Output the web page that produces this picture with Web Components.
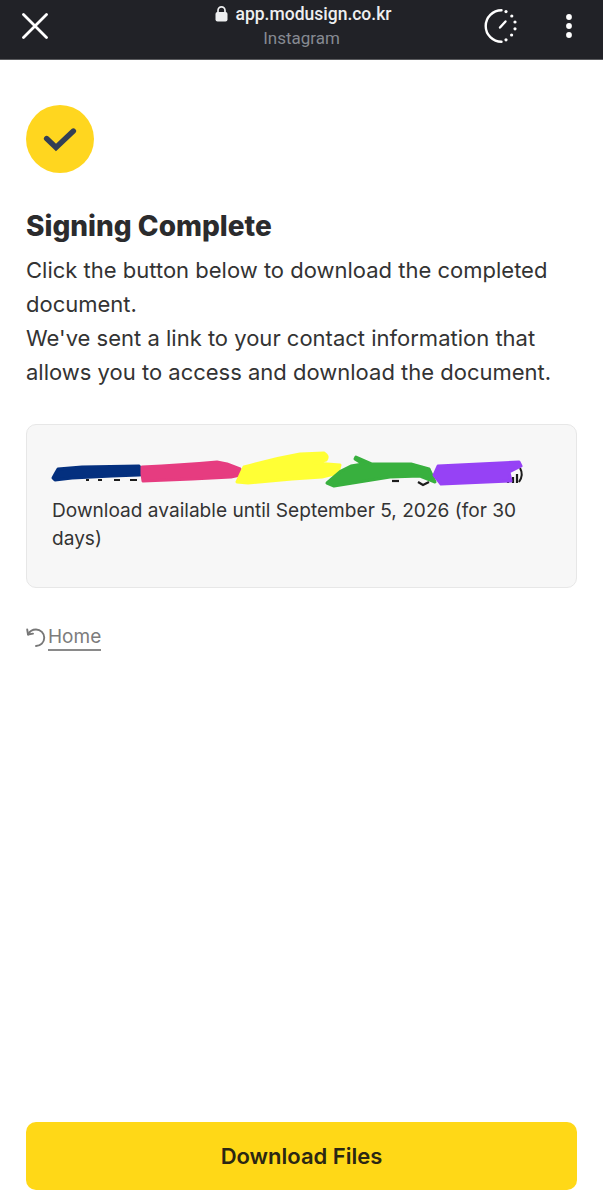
<!DOCTYPE html>
<html lang="en">
<head>
<meta charset="utf-8">
<title>Signing Complete</title>
<style>
  html, body { margin: 0; padding: 0; background: #fff; }
</style>
</head>
<body>
<signing-page>
  <browser-bar slot="bar" host-name="app.modusign.co.kr" source="Instagram"></browser-bar>
  <done-badge slot="badge"></done-badge>
  <span slot="title">Signing Complete</span>
  <span slot="message">Click the button below to download the completed document.<br>We've sent a link to your contact information that allows you to access and download the document.</span>
  <doc-card slot="card">Download available until September 5, 2026 (for 30 days)</doc-card>
  <home-link slot="link">Home</home-link>
  <primary-button slot="action">Download Files</primary-button>
</signing-page>

<script>
const barTemplate = document.createElement('template');
barTemplate.innerHTML = `
  <style>
    :host {
      display: grid;
      grid-template-columns: 1fr auto 1fr;
      align-items: center;
      height: 51px;
      padding-bottom: 8px;
      border-bottom: 1px solid #5a5b5e;
      background: #212227;
      font-family: Roboto, "Liberation Sans", sans-serif;
    }
    .close { width: 26px; height: 26px; margin-left: 22px; }
    .site { display: flex; flex-direction: column; align-items: center; }
    .host { display: flex; align-items: center; gap: 8px; height: 23px; margin: 1px 0 0 3px; font-size: 17.5px; font-weight: 500; color: #eeeff0; }
    .source { height: 23px; margin-top: 1px; line-height: 23px; font-size: 17px; color: #868a92; }
    .actions { display: flex; align-items: center; justify-content: flex-end; gap: 46px; margin-right: 30px; }
    .timer { width: 36px; height: 36px; }
    .more { width: 8px; height: 26px; }
    svg { display: block; }
  </style>
  <svg class="close" viewBox="0 0 26 26" fill="none" stroke="#fff" stroke-width="2.8" stroke-linecap="round">
    <path d="M1.5 1.5 24.5 24.5M24.5 1.5 1.5 24.5"/>
  </svg>
  <div class="site">
    <div class="host">
      <svg width="13" height="16" viewBox="0 0 13 16">
        <path d="M3 7V4.4a3.5 3.5 0 0 1 7 0V7" fill="none" stroke="#eeeff0" stroke-width="1.7"/>
        <rect x="0.5" y="6" width="12" height="9.6" rx="2" fill="#eeeff0"/>
      </svg>
      <span class="name"></span>
    </div>
    <div class="source"></div>
  </div>
  <div class="actions">
    <svg class="timer" viewBox="0 0 36 36" fill="none" stroke="#fff">
      <path d="M18.5 2.2A15.8 15.8 0 1 0 18.5 33.8" stroke-width="2.4" stroke-linecap="round"/>
      <path d="M17 19.5 22.5 13.5" stroke-width="2.4" stroke-linecap="round"/>
      <g fill="#fff" stroke="none">
        <circle cx="23" cy="3.6" r="1.6"/>
        <circle cx="28.8" cy="8" r="1.6"/>
        <circle cx="32" cy="14" r="1.6"/>
        <circle cx="32" cy="20.8" r="1.6"/>
        <circle cx="28.6" cy="27" r="1.6"/>
        <circle cx="23" cy="31.8" r="1.6"/>
      </g>
    </svg>
    <svg class="more" viewBox="0 0 8 26" fill="#fff">
      <circle cx="4" cy="4" r="2.9"/>
      <circle cx="4" cy="13" r="2.9"/>
      <circle cx="4" cy="22" r="2.9"/>
    </svg>
  </div>
`;
class BrowserBar extends HTMLElement {
  constructor() {
    super();
    this.attachShadow({ mode: 'open' });
    this.shadowRoot.appendChild(barTemplate.content.cloneNode(true));
  }

  connectedCallback() {
    this.shadowRoot.querySelector('.name').textContent = this.getAttribute('host-name');
    this.shadowRoot.querySelector('.source').textContent = this.getAttribute('source');
  }
}
window.customElements.define('browser-bar', BrowserBar);

const badgeTemplate = document.createElement('template');
badgeTemplate.innerHTML = `
  <style>
    :host {
      display: flex;
      align-items: center;
      justify-content: center;
      width: 68px;
      height: 68px;
      border-radius: 50%;
      background: #ffd61f;
    }
    svg { display: block; width: 34px; height: 26px; }
  </style>
  <svg viewBox="0 0 34 26" fill="none" stroke="#333f55" stroke-width="5.4" stroke-linecap="round" stroke-linejoin="miter">
    <path d="M3.6 12.5 13 21.5 30.4 5"/>
  </svg>
`;
class DoneBadge extends HTMLElement {
  constructor() {
    super();
    this.attachShadow({ mode: 'open' });
    this.shadowRoot.appendChild(badgeTemplate.content.cloneNode(true));
  }
}
window.customElements.define('done-badge', DoneBadge);

const cardTemplate = document.createElement('template');
cardTemplate.innerHTML = `
  <style>
    :host {
      display: block;
      padding: 35px 25px 35px 25px;
      background: #f7f7f7;
      border: 1px solid #e7e7e7;
      border-radius: 10px;
      font-size: 19.1px;
      line-height: 28px;
      color: #333;
    }
    .name { position: relative; height: 28px; margin-bottom: 8px; }
    .name svg { position: absolute; left: 0; top: 0; overflow: visible; }
    .blob { stroke-width: 3; stroke-linejoin: round; }
  </style>
  <div class="name">
    <svg width="499" height="28" viewBox="0 0 499 28">
      <!-- bits of the document name that show past the scribbles -->
      <g fill="none" stroke="#1c1c1c" stroke-width="2.2">
        <path d="M34 20H37M46 20H50M62 20H68M78 20H85"/>
        <path d="M182 15H186M191 16H194"/>
        <path d="M340 21H347"/>
        <path d="M366 22 371 25 377 22"/>
        <path d="M456 18V23M461 17V23M465 14V23"/>
      </g>
      <path d="M468 8Q472 15 467 22" fill="none" stroke="#1c1c1c" stroke-width="2"/>
      <path class="blob" fill="#04307f" stroke="#04307f" d="M1 18Q3 14 6 9L30 7 87 6 89 10 96 12 96 14 87 15 60 16 20 18 3 20Z"/>
      <path class="blob" fill="#e63c80" stroke="#e63c80" d="M90 7Q130 5 165 2L175 4 188 9 188 15 179 17 140 19 91 21 90 14Z"/>
      <path class="blob" fill="#ffff35" stroke="#ffff35" d="M185 22 192 7Q220 -1 248 -6L272 -7Q277 -4 274 0L262 3 288 5 286 13 270 17 240 19 196 23Z"/>
      <path class="blob" fill="#38b03e" stroke="#38b03e" d="M304 -3 320 4 359 4 377 9 383 22 368 16 338 17 282 26 275 23 289 11 299 6 311 4 303 -1Z"/>
      <path class="blob" fill="#9642f5" stroke="#9642f5" d="M386 6 467 2 469 6 457 12 459 21 389 24 382 15Z"/>
    </svg>
  </div>
  <slot></slot>
`;
class DocCard extends HTMLElement {
  constructor() {
    super();
    this.attachShadow({ mode: 'open' });
    this.shadowRoot.appendChild(cardTemplate.content.cloneNode(true));
  }
}
window.customElements.define('doc-card', DocCard);

const linkTemplate = document.createElement('template');
linkTemplate.innerHTML = `
  <style>
    :host {
      display: inline-flex;
      align-items: center;
      gap: 2px;
      font-size: 19px;
      line-height: 24px;
      color: #7c7c7c;
    }
    a { color: inherit; text-decoration: none; border-bottom: 2px solid #8a8a8a; }
    svg { display: block; width: 20px; height: 20px; flex: none; }
  </style>
  <svg viewBox="0 0 20 20" fill="none" stroke="#777" stroke-width="1.9" stroke-linecap="round" stroke-linejoin="round">
    <path d="M2 6.5C3.5 3.5 6.5 1.5 10 1.5A8.2 8.2 0 0 1 10 18"/>
    <path d="M1.2 1.5 2 6.5 7 5.6"/>
  </svg>
  <a href="#"><slot></slot></a>
`;
class HomeLink extends HTMLElement {
  constructor() {
    super();
    this.attachShadow({ mode: 'open' });
    this.shadowRoot.appendChild(linkTemplate.content.cloneNode(true));
  }
}
window.customElements.define('home-link', HomeLink);

const buttonTemplate = document.createElement('template');
buttonTemplate.innerHTML = `
  <style>
    :host { display: block; }
    button {
      display: block;
      width: 100%;
      height: 68px;
      border: 0;
      border-radius: 10px;
      background: #ffd817;
      color: #2b2713;
      font-family: inherit;
      font-size: 22px;
      font-weight: 600;
      cursor: pointer;
    }
  </style>
  <button type="button"><slot></slot></button>
`;
class PrimaryButton extends HTMLElement {
  constructor() {
    super();
    this.attachShadow({ mode: 'open' });
    this.shadowRoot.appendChild(buttonTemplate.content.cloneNode(true));
  }
}
window.customElements.define('primary-button', PrimaryButton);

const pageTemplate = document.createElement('template');
pageTemplate.innerHTML = `
  <style>
    :host {
      display: flex;
      flex-direction: column;
      height: 1199px;
      box-sizing: border-box;
      font-family: Inter, "Liberation Sans", sans-serif;
      color: #333;
    }
    main {
      flex: 1;
      display: flex;
      flex-direction: column;
      align-items: flex-start;
      padding: 45px 26px 9px 26px;
    }
    h1 {
      margin: 33px 0 0 0;
      font-size: 28px;
      line-height: 40px;
      font-weight: 800;
      color: #2b2b2d;
    }
    p {
      margin: 7px 0 0 0;
      font-size: 22px;
      line-height: 34px;
      color: #333;
    }
    .card { align-self: stretch; margin-top: 35px; }
    .link { margin-top: 37px; }
    .action { align-self: stretch; margin-top: auto; }
  </style>
  <slot name="bar"></slot>
  <main>
    <slot name="badge"></slot>
    <h1><slot name="title"></slot></h1>
    <p><slot name="message"></slot></p>
    <div class="card"><slot name="card"></slot></div>
    <div class="link"><slot name="link"></slot></div>
    <div class="action"><slot name="action"></slot></div>
  </main>
`;
class SigningPage extends HTMLElement {
  constructor() {
    super();
    this.attachShadow({ mode: 'open' });
    this.shadowRoot.appendChild(pageTemplate.content.cloneNode(true));
  }
}
window.customElements.define('signing-page', SigningPage);
</script>
</body>
</html>
